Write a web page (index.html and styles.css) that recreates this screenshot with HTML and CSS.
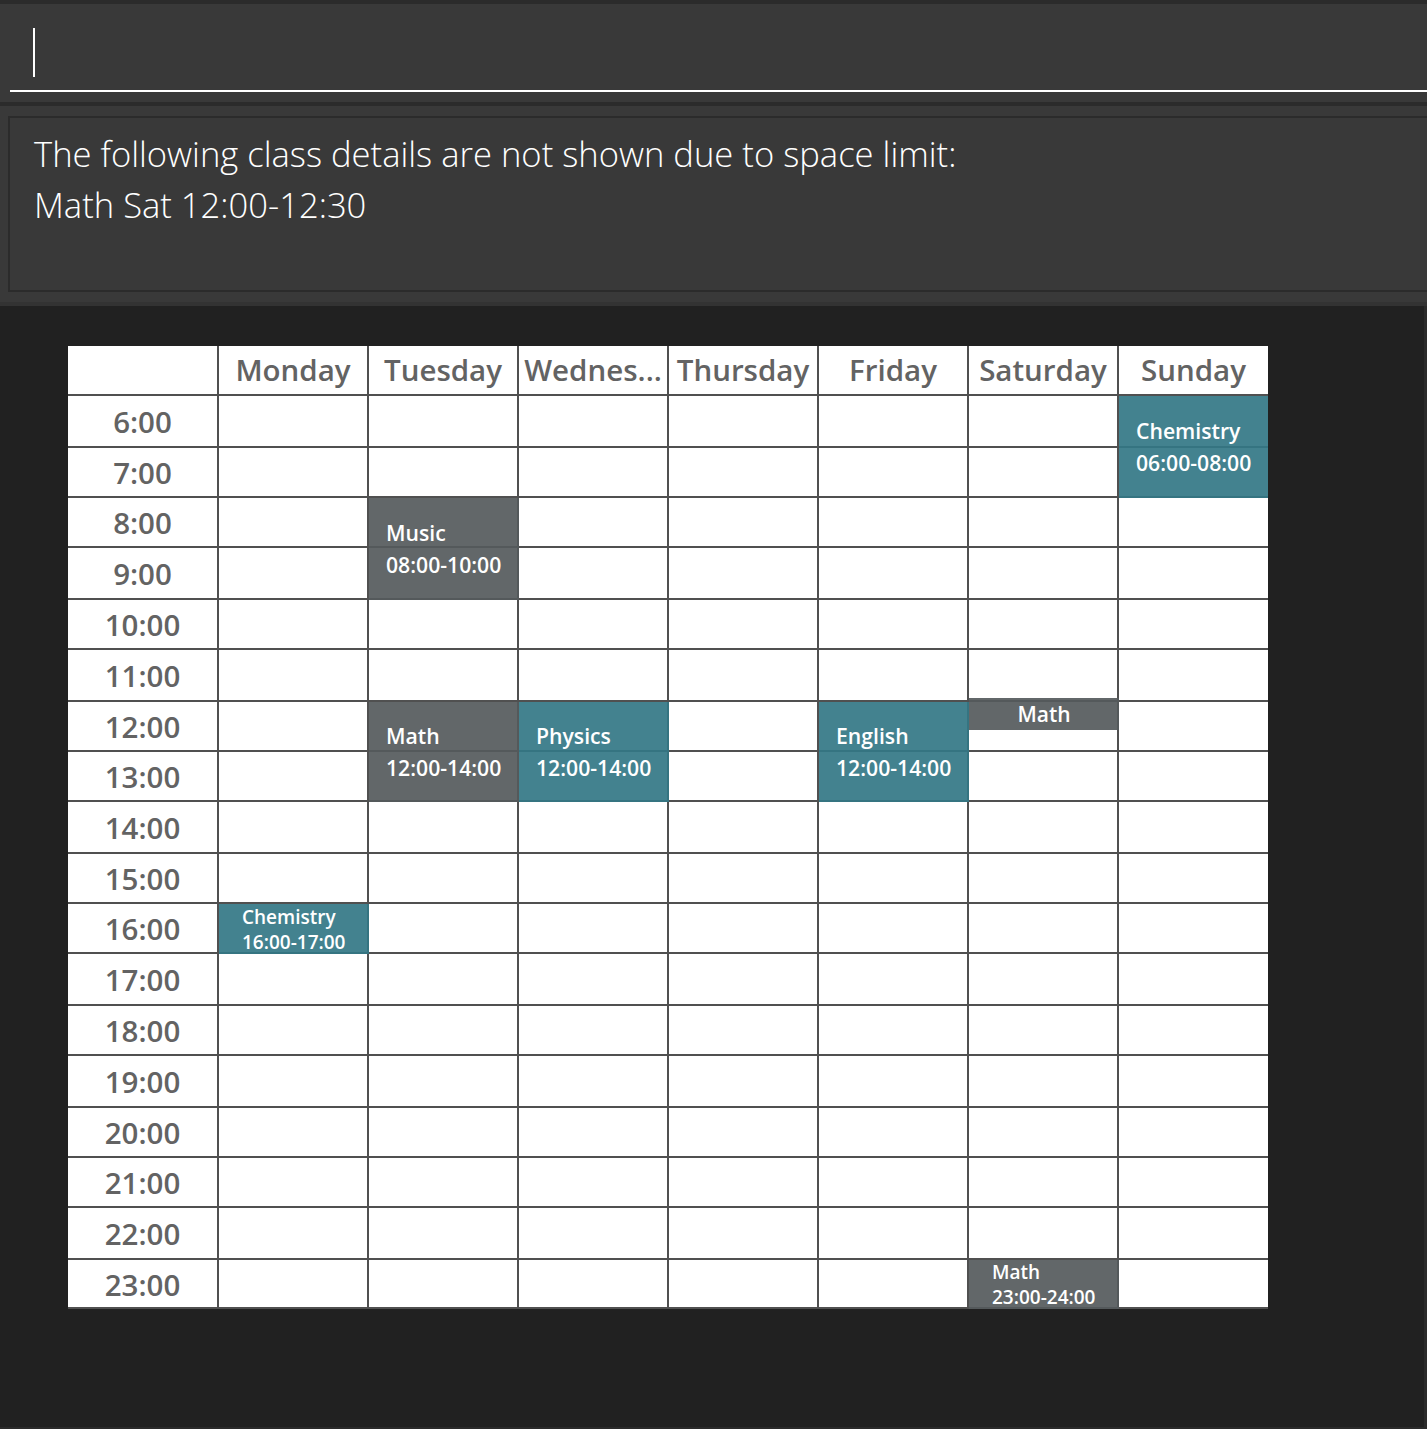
FILE: index.html
```html
<!DOCTYPE html>
<html lang="en">
<head>
<meta charset="utf-8">
<title>Timetable</title>
<link rel="stylesheet" href="styles.css">
</head>
<body>
<div class="app">
  <div class="command">
    <div class="command-field"><span class="caret"></span></div>
  </div>
  <div class="result">
    <div class="result-box">
      <p>The following class details are not shown due to space limit:</p>
      <p>Math Sat 12:00-12:30</p>
    </div>
  </div>
  <div class="calendar-area">
    <div class="timetable">
      <div class="cells">
        <div class="cell head"></div><div class="cell head">Monday</div><div class="cell head">Tuesday</div><div class="cell head">Wednes...</div><div class="cell head">Thursday</div><div class="cell head">Friday</div><div class="cell head">Saturday</div><div class="cell head last">Sunday</div>
        <div class="cell time">6:00</div><div class="cell"></div><div class="cell"></div><div class="cell"></div><div class="cell"></div><div class="cell"></div><div class="cell"></div><div class="cell last"></div>
        <div class="cell time">7:00</div><div class="cell"></div><div class="cell"></div><div class="cell"></div><div class="cell"></div><div class="cell"></div><div class="cell"></div><div class="cell last"></div>
        <div class="cell time">8:00</div><div class="cell"></div><div class="cell"></div><div class="cell"></div><div class="cell"></div><div class="cell"></div><div class="cell"></div><div class="cell last"></div>
        <div class="cell time">9:00</div><div class="cell"></div><div class="cell"></div><div class="cell"></div><div class="cell"></div><div class="cell"></div><div class="cell"></div><div class="cell last"></div>
        <div class="cell time">10:00</div><div class="cell"></div><div class="cell"></div><div class="cell"></div><div class="cell"></div><div class="cell"></div><div class="cell"></div><div class="cell last"></div>
        <div class="cell time">11:00</div><div class="cell"></div><div class="cell"></div><div class="cell"></div><div class="cell"></div><div class="cell"></div><div class="cell"></div><div class="cell last"></div>
        <div class="cell time">12:00</div><div class="cell"></div><div class="cell"></div><div class="cell"></div><div class="cell"></div><div class="cell"></div><div class="cell"></div><div class="cell last"></div>
        <div class="cell time">13:00</div><div class="cell"></div><div class="cell"></div><div class="cell"></div><div class="cell"></div><div class="cell"></div><div class="cell"></div><div class="cell last"></div>
        <div class="cell time">14:00</div><div class="cell"></div><div class="cell"></div><div class="cell"></div><div class="cell"></div><div class="cell"></div><div class="cell"></div><div class="cell last"></div>
        <div class="cell time">15:00</div><div class="cell"></div><div class="cell"></div><div class="cell"></div><div class="cell"></div><div class="cell"></div><div class="cell"></div><div class="cell last"></div>
        <div class="cell time">16:00</div><div class="cell"></div><div class="cell"></div><div class="cell"></div><div class="cell"></div><div class="cell"></div><div class="cell"></div><div class="cell last"></div>
        <div class="cell time">17:00</div><div class="cell"></div><div class="cell"></div><div class="cell"></div><div class="cell"></div><div class="cell"></div><div class="cell"></div><div class="cell last"></div>
        <div class="cell time">18:00</div><div class="cell"></div><div class="cell"></div><div class="cell"></div><div class="cell"></div><div class="cell"></div><div class="cell"></div><div class="cell last"></div>
        <div class="cell time">19:00</div><div class="cell"></div><div class="cell"></div><div class="cell"></div><div class="cell"></div><div class="cell"></div><div class="cell"></div><div class="cell last"></div>
        <div class="cell time">20:00</div><div class="cell"></div><div class="cell"></div><div class="cell"></div><div class="cell"></div><div class="cell"></div><div class="cell"></div><div class="cell last"></div>
        <div class="cell time">21:00</div><div class="cell"></div><div class="cell"></div><div class="cell"></div><div class="cell"></div><div class="cell"></div><div class="cell"></div><div class="cell last"></div>
        <div class="cell time">22:00</div><div class="cell"></div><div class="cell"></div><div class="cell"></div><div class="cell"></div><div class="cell"></div><div class="cell"></div><div class="cell last"></div>
        <div class="cell time">23:00</div><div class="cell"></div><div class="cell"></div><div class="cell"></div><div class="cell"></div><div class="cell"></div><div class="cell"></div><div class="cell last"></div>
      </div>
      <div class="events">
        <div class="event teal two ev-sun-chem"><span>Chemistry</span><span>06:00-08:00</span></div>
        <div class="event gray two ev-tue-music"><span>Music</span><span>08:00-10:00</span></div>
        <div class="event gray two ev-tue-math"><span>Math</span><span>12:00-14:00</span></div>
        <div class="event teal two ev-wed-phys"><span>Physics</span><span>12:00-14:00</span></div>
        <div class="event teal two ev-fri-eng"><span>English</span><span>12:00-14:00</span></div>
        <div class="event gray mini ev-sat-math-short"><span>Math</span></div>
        <div class="event teal one ev-mon-chem"><span>Chemistry</span><span>16:00-17:00</span></div>
        <div class="event gray one ev-sat-math-late"><span>Math</span><span>23:00-24:00</span></div>
      </div>
    </div>
  </div>
</div>
</body>
</html>
```

FILE: styles.css
```css
* { box-sizing: border-box; }

html, body {
  margin: 0;
  padding: 0;
  background: #2b2b2b;
  font-family: "Open Sans", "Noto Sans", "Liberation Sans", sans-serif;
}

.app {
  width: 1427px;
  height: 1429px;
  display: flex;
  flex-direction: column;
  padding-top: 4px;
}

.command {
  height: 98px;
  background: #393939;
  padding-left: 10px;
}

.command-field {
  height: 88px;
  border-bottom: 2px solid #ffffff;
  padding-left: 23px;
  padding-top: 24px;
}

.caret {
  display: block;
  width: 2px;
  height: 49px;
  background: #ffffff;
}

.result {
  margin-top: 4px;
  height: 200px;
  background: #393939;
  padding: 10px 0 14px 8px;
  border-bottom: 4px solid #333333;
}

.result-box {
  height: 176px;
  border: 2px solid #2b2b2b;
  border-right: none;
  padding: 10px 24px;
  color: #ffffff;
  font-size: 34.6px;
  font-weight: 300;
  line-height: 51px;
}

.result-box p {
  margin: 0;
  white-space: nowrap;
}

.calendar-area {
  flex: 1;
  background: #212121;
  margin-right: 3px;
  margin-bottom: 2px;
  padding: 40px 0 0 68px;
}

.timetable {
  display: grid;
  width: 1200px;
}

.cells,
.events {
  grid-area: 1 / 1;
  display: grid;
  grid-template-columns: 151px repeat(6, 150px) 149px;
  grid-template-rows: 50px 52px 50px 50px 52px 50px 52px 50px 50px 52px 50px 50px 52px 50px 52px 50px 50px 52px 49px;
}

.cells {
  background: #ffffff;
}

.cell {
  border-right: 2px solid #505050;
  border-bottom: 2px solid #505050;
  color: #636363;
  font-size: 29.5px;
  font-weight: 600;
  display: flex;
  align-items: center;
  justify-content: center;
  white-space: nowrap;
  overflow: hidden;
}

.cell.last {
  border-right: none;
}

.cell.head {
  padding-bottom: 2px;
}

.cell.time {
  padding-top: 1px;
}

.event {
  color: #ffffff;
  font-weight: 600;
  display: flex;
  flex-direction: column;
  justify-content: center;
  white-space: nowrap;
}

.event.teal { background: rgba(51, 119, 133, 0.92); }
.event.gray { background: rgba(85, 90, 92, 0.92); }

.event.two {
  font-size: 21.2px;
  line-height: 32px;
  padding-left: 17px;
}

.event.one {
  font-size: 19px;
  line-height: 25px;
  padding-left: 23px;
  padding-top: 1px;
}

.event.mini {
  font-size: 21px;
  line-height: 30px;
  text-align: center;
  align-self: start;
  height: 32px;
  margin-top: -4px;
}

.ev-sun-chem { grid-column: 8; grid-row: 2 / 4; }
.ev-tue-music { grid-column: 3; grid-row: 4 / 6; }
.ev-tue-math { grid-column: 3; grid-row: 8 / 10; }
.ev-wed-phys { grid-column: 4; grid-row: 8 / 10; }
.ev-fri-eng { grid-column: 6; grid-row: 8 / 10; }
.ev-sat-math-short { grid-column: 7; grid-row: 8; }
.ev-mon-chem { grid-column: 2; grid-row: 12; }
.ev-sat-math-late { grid-column: 7; grid-row: 19; }
```
